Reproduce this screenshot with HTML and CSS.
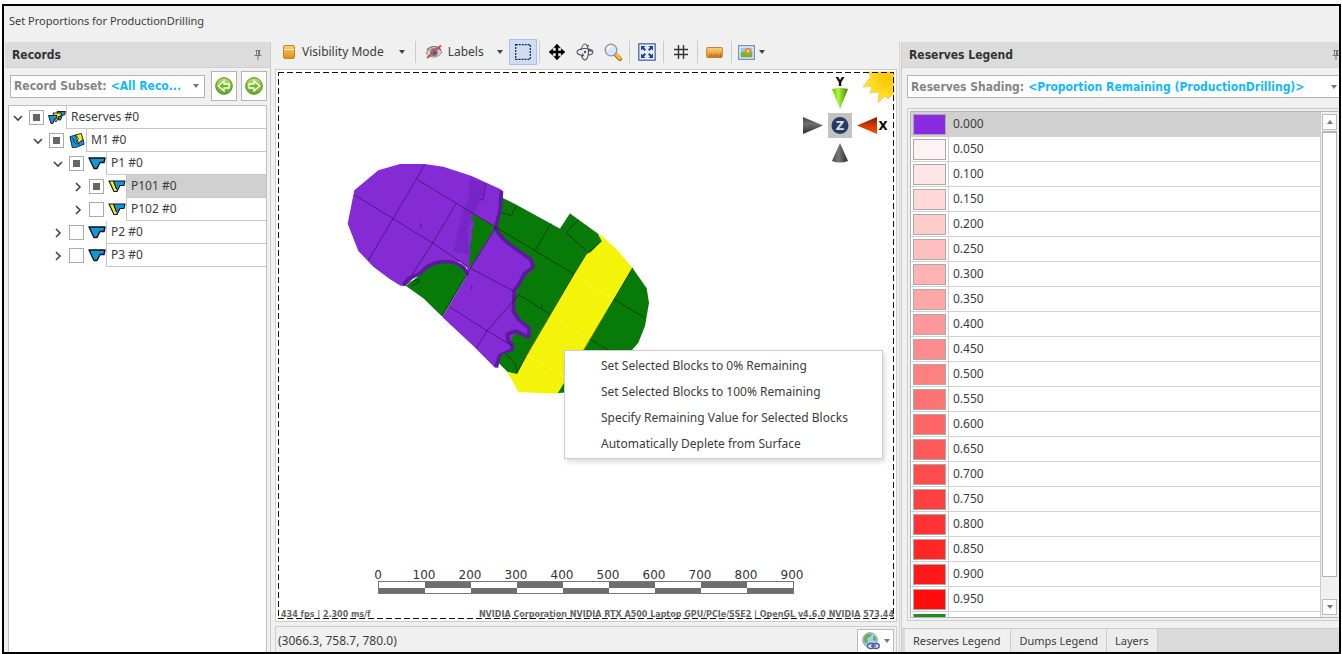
FILE: index.html
```html
<!DOCTYPE html>
<html lang="en">
<head>
<meta charset="utf-8">
<title>Set Proportions for ProductionDrilling</title>
<link rel="stylesheet" href="styles.css">
</head>
<body>
<svg class="defs" width="0" height="0" aria-hidden="true">
  <defs>
    <linearGradient id="gold" x1="0" y1="0" x2="0" y2="1"><stop offset="0" stop-color="#fbd27a"/><stop offset="1" stop-color="#e28a14"/></linearGradient>
    <linearGradient id="lime" x1="0" y1="0" x2="0" y2="1"><stop offset="0" stop-color="#b4e468"/><stop offset="1" stop-color="#5aa818"/></linearGradient>
    <linearGradient id="coneLime" x1="0" y1="0" x2="1" y2="0"><stop offset="0" stop-color="#6fc010"/><stop offset=".4" stop-color="#aaf83a"/><stop offset="1" stop-color="#4c7c10"/></linearGradient>
    <linearGradient id="coneGrey" x1="0" y1="0" x2="1" y2="0"><stop offset="0" stop-color="#444"/><stop offset=".4" stop-color="#777"/><stop offset="1" stop-color="#2c2c2c"/></linearGradient>
    <linearGradient id="coneGreyV" x1="0" y1="0" x2="0" y2="1"><stop offset="0" stop-color="#444"/><stop offset=".4" stop-color="#707070"/><stop offset="1" stop-color="#2c2c2c"/></linearGradient>
    <linearGradient id="coneRed" x1="0" y1="0" x2="0" y2="1"><stop offset="0" stop-color="#6e2005"/><stop offset=".55" stop-color="#d83a08"/><stop offset="1" stop-color="#ff4a05"/></linearGradient>
    <radialGradient id="sun" cx=".8" cy=".2" r=".9"><stop offset="0" stop-color="#ffc400"/><stop offset="1" stop-color="#ffe83c"/></radialGradient>
    <symbol id="pin" viewBox="0 0 8 10"><path d="M1.500.5h5M2.500.5v5M4.500.5v5M5.500.5v5M.5 5.500h7M4 5.500V10" fill="none" stroke="#777"/></symbol>
    <symbol id="pit" viewBox="0 0 18 14"><path d="M1 1.500h16l-1 4.500h-4l-3 6H6z" fill="#1596dc" stroke="#111" stroke-width="1.400" stroke-linejoin="round"/></symbol>
    <symbol id="stage" viewBox="0 0 18 14"><path d="M1 1.500h16l-1 4.500h-4l-3 6H6z" fill="#1596dc"/><path d="M1 1.500h4.500L9 12H6z" fill="#ffe81a"/><path d="M5.500 1.500l3 8M1 1.500h16l-1 4.500h-4l-3 6H6z" fill="none" stroke="#111" stroke-width="1.100" stroke-linejoin="round"/></symbol>
    <symbol id="pits" viewBox="0 0 18 14"><g stroke="#111" stroke-width=".9" stroke-linejoin="round"><path d="M9 1h8.500l-1 3.500h-2l-2 5h-2z" fill="#1596dc"/><path d="M5 2.500h8.500l-1 3.500h-2l-2 5H7z" fill="#ffe81a"/><path d="M.5 5h8.500l-1 3.500H6.500l-1.500 4.500H3z" fill="#1596dc"/></g></symbol>
    <symbol id="model" viewBox="0 0 18 16"><g stroke="#123" stroke-linejoin="round"><path d="M1.500 4l6-2 1 4 3 4 4-3 1 5-9 3.500H4z" fill="#1596dc"/><path d="M7.500 2l6-1.500L15.500 7l-4 3-3-1 2-3z" fill="#ffe81a"/><path d="M4 5c3 2 0 4 3 6s3-1 5 1" fill="none"/></g></symbol>
  </defs>
</svg>
<div class="window">
  <header class="title">Set Proportions for ProductionDrilling</header>
  <main class="work">
    <section class="panel records">
      <h2 class="panel-head">Records <svg class="pin"><use href="#pin"/></svg></h2>
      <div class="subset">
        <div class="combo">
          <label for="subset">Record Subset:</label>
          <select id="subset"><option>&lt;All Reco...</option></select>
        </div>
        <button class="nav" aria-label="Previous"><svg width="18" height="18" viewBox="0 0 18 18"><circle cx="9" cy="9" r="8.300" fill="url(#lime)" stroke="#4c8d1c"/><path d="M3.500 9L9 4v3h5v4H9v3z" fill="#6fb62a" stroke="#fff" stroke-width="1.300"/></svg></button>
        <button class="nav" aria-label="Next"><svg width="18" height="18" viewBox="0 0 18 18"><circle cx="9" cy="9" r="8.300" fill="url(#lime)" stroke="#4c8d1c"/><path d="M14.500 9L9 4v3H4v4h5v3z" fill="#6fb62a" stroke="#fff" stroke-width="1.300"/></svg></button>
      </div>
      <div class="tree" id="tree"></div>
    </section>

    <section class="view">
      <div class="toolbar">
        <button class="tool wide"><svg width="12" height="14" viewBox="0 0 12 14"><rect x=".5" y=".5" width="11" height="13" rx="1.500" fill="url(#gold)" stroke="#c98320"/><path d="M1 4.500h10" stroke="#fff0b8"/></svg>Visibility Mode<i class="caret"></i></button>
        <span class="sep"></span>
        <button class="tool wide labels"><svg width="18" height="16" viewBox="0 0 18 16"><path d="M1 9c3-6 13-6 16-1-3 6-12 7-16 1z" fill="#dcd0c8" stroke="#a08878"/><path d="M2 6c4-5 11-4 14 0" fill="none" stroke="#806858" stroke-width="1.300"/><circle cx="9" cy="8.500" r="3.800" fill="#5c7ca8"/><circle cx="9" cy="8.500" r="1.500" fill="#223"/><path d="M2 14L16 1.500" stroke="#d64a42" stroke-width="2"/></svg>Labels<i class="caret"></i></button>
        <button class="tool active" aria-label="Select box"><svg width="16" height="16" viewBox="0 0 16 16"><rect x=".7" y=".7" width="14.600" height="14.600" fill="none" stroke="#222" stroke-width="1.200" stroke-dasharray="2 1"/></svg></button>
        <span class="sep"></span>
        <button class="tool" aria-label="Pan"><svg width="16" height="16" viewBox="0 0 16 16"><path d="M8 0l3.300 3.800H9v3.200h3.200V4.700L16 8l-3.800 3.300V9H9v3.200h2.300L8 16l-3.300-3.800H7V9H3.800v2.300L0 8l3.800-3.300V7H7V3.800H4.700z" stroke="#000" stroke-width=".5"/></svg></button>
        <button class="tool" aria-label="Rotate"><svg width="18" height="18" viewBox="0 0 18 18" fill="none" stroke="#50555c" stroke-width="1.100"><path d="M7 12.500C3 12 1 10.500 1 9c0-2 4-3.500 8-3.500s8 1.500 8 3.500c0 1.500-2 2.800-5 3.300M6 10.500l1.500 2L5.500 14M9 1c2 0 3.500 4 3.500 8S11 17 9 17s-3.500-3-3.500-5M5.500 7C5.800 3.500 7.500 1 9 1M10.500 3L13 2.500M12 9l2-2 1.500 2"/><circle cx="9" cy="9" r=".7" fill="#333"/></svg></button>
        <button class="tool" aria-label="Zoom"><svg width="18" height="18" viewBox="0 0 18 18"><path d="M11 11l5 5" stroke="#a86a10" stroke-width="4" stroke-linecap="round"/><path d="M11.500 11l4.500 4.500" stroke="#ffbe28" stroke-width="2.600" stroke-linecap="round"/><circle cx="7" cy="7" r="5.800" fill="#d4e8fa" stroke="#8496a8" stroke-width="1.300"/><path d="M3.500 6.500c.5-2 2-3 4-3" fill="none" stroke="#fff" stroke-width="1.600"/></svg></button>
        <span class="sep"></span>
        <button class="tool" aria-label="Fit"><svg width="18" height="18" viewBox="0 0 18 18"><rect x=".8" y=".8" width="16.400" height="16.400" fill="#e4ecfa" stroke="#4c6aa6" stroke-width="1.300"/><g fill="#264478"><path d="M3 3h4.500L6 4.500 8 6.500 6.500 8l-2-2L3 7.500zM15 3v4.500L13.500 6l-2 2L10 6.500l2-2L10.500 3zM3 15v-4.500L4.500 12l2-2L8 11.500l-2 2L7.500 15zM15 15h-4.500l1.500-1.500-2-2 1.500-1.500 2 2 1.500-1.500z"/></g></svg></button>
        <span class="sep"></span>
        <button class="tool" aria-label="Grid"><svg width="14" height="14" viewBox="0 0 14 14"><path d="M4.500 0v14M9.500 0v14M0 4.500h14M0 9.500h14" stroke="#333" stroke-width="1.400"/></svg></button>
        <span class="sep"></span>
        <button class="tool" aria-label="Measure"><svg width="17" height="11" viewBox="0 0 18 12"><rect x=".5" y=".5" width="17" height="11" rx="1" fill="url(#gold)" stroke="#c2702a"/><path d="M3.500 11V8M6 11V7M8.500 11V8M11 11V7M13.500 11V8M15.500 11V7" stroke="#a8641c"/></svg></button>
        <span class="sep"></span>
        <button class="tool image" aria-label="Background image"><svg width="17" height="15" viewBox="0 0 17 15"><rect x=".7" y=".7" width="15.600" height="13.600" fill="#fff" stroke="#6c8cc8" stroke-width="1.300"/><path d="M2.500 2.500h12v5h-12z" fill="#9cc4ee"/><path d="M2.500 7.500c4-2 8 0 12-1v6h-12z" fill="#78b03c"/><circle cx="10" cy="6" r="3.200" fill="#e09038"/><circle cx="10" cy="6" r="1.200" fill="#ffe090"/></svg><i class="caret"></i></button>
      </div>

      <div class="viewport">
        <svg class="map" viewBox="0 0 1020 750">
          <path fill="#087a08" d="M515 140L555 160 690 234 720 188 812 255 907 350 950 412 957 455 945 525 925 575 895 610 740 722 685 726 600 715 561 670 533 663 505 635 480 300z"/>
          <path fill="#f4f40a" d="M804 250L812 252 860 295 907 350 762 598 685 724 680 728 565 723 545 685 531 663 561 670 600 595 735 365 770 308 782 304 815 270z"/>
          <path fill="#852bd6" d="M73 118L145 58 210 39 285 39 340 47 425 75 515 116 520 125 508 190 498 229 520 260 560 292 606 320 612 350 575 385 565 412 550 440 552 490 602 530 598 560 560 545 545 560 550 600 508 620 505 650 495 650 430 585 337 498 408 378 412 350 390 334 340 328 300 340 262 370 228 405 212 404 180 385 130 347 85 300 53 218z"/>
          <path fill="#7725c6" d="M418 84L466 96 446 160 412 235 418 312 370 300 398 180 415 150z"/>
          <path fill="#087a08" d="M228 405L262 378 290 352Q330 322 375 334L404 350 408 378 337 497 280 442z"/>
          <path fill="#087a08" d="M430 190L496 228 420 352 417 335 422 300 420 285 426 260 425 240 434 215 425 210z"/>
          <path fill="none" stroke="#5b1a9a" stroke-width="11" stroke-linejoin="round" d="M514 120L511 175 501 215 497 232Q512 262 550 288L602 325 610 347 582 370 568 398 553 418 550 480 566 506 598 532 596 558 556 540 532 550 534 568 549 583 545 598 508 614 498 648M220 402L235 383 270 368Q300 330 350 332 385 334 403 352L413 373"/>
          <path fill="#087a08" d="M552 552L594 566 568 600 558 640 510 632 516 610 553 600z"/>
          <g fill="none" stroke="#000" stroke-opacity=".5" stroke-width="2.500">
            <path d="M74 132l115 71 119 73 108 73M284 42L189 203 115 328M262 86l236 143 117 70 117 71M378 158L308 276l-63 97M498 229L421 352 336 495M664 217L615 299M568 430l-97 109-31 52M358 467l113 72 75 45M421 352l130 68M565 430l95 60M852 445l94 56M780 565l65 38M515 185l28 9 15-28M745 207l-37 38 62 55M908 351L760 598M815 270l-45 38L732 370 560 665M468 98l-10 50-10-4"/>
            <path stroke="#073f07" d="M515 140l40 20 135 74 30-46 86 62"/>
            <path d="M234 396l33-12-3 12-20 8M530 610l26 30 5 24M272 218v12M425 405v10M635 460v12"/>
          </g>
          <path fill="none" stroke="#ffff3a" stroke-width="2" d="M732 370l110 70M685 508l75 48M590 612l110 65"/>
        </svg>
        <svg class="gizmo" viewBox="0 0 96 96" role="img" aria-label="View axes">
          <path fill="url(#sun)" stroke="#ecc860" stroke-width=".8" d="M67 2L71 6 63 17 72 16 70 23 79 22 78 33 85 26 88 29 94 23V2z"/>
          <path fill="url(#coneLime)" d="M32 19q8-2 16 0l-8 20z"/>
          <path fill="url(#coneGrey)" d="M40 73l8 18q-8 3-16 0z"/>
          <path fill="url(#coneGreyV)" d="M3 47l20 8.500L3 64z"/>
          <path fill="url(#coneRed)" d="M57 55.500L77 47v17z"/>
          <path fill="#c3c3c3" d="M28 43h24v25H28z"/>
          <circle cx="40" cy="55.500" r="8.500" fill="#263a66"/>
          <text x="40" y="60" class="axis z">Z</text>
          <text x="40" y="16" class="axis">Y</text>
          <text x="83" y="60" class="axis">X</text>
        </svg>
        <div class="scale">
          <div class="scale-nums"><span>0</span><span>100</span><span>200</span><span>300</span><span>400</span><span>500</span><span>600</span><span>700</span><span>800</span><span>900</span></div>
          <div class="scale-bar"><i></i><i></i><i></i><i></i><i></i><i></i><i></i><i></i><i></i></div>
        </div>
        <div class="stats"><span>434 fps | 2.300 ms/f</span><span>NVIDIA Corporation NVIDIA RTX A500 Laptop GPU/PCIe/SSE2 | OpenGL v4.6.0 NVIDIA 573.44</span></div>
        <svg class="marquee"><rect width="100%" height="100%"/></svg>
        <div class="menu" role="menu">
          <button role="menuitem">Set Selected Blocks to 0% Remaining</button>
          <button role="menuitem">Set Selected Blocks to 100% Remaining</button>
          <button role="menuitem">Specify Remaining Value for Selected Blocks</button>
          <button role="menuitem">Automatically Deplete from Surface</button>
        </div>
      </div>
      <footer class="status"><span>(3066.3, 758.7, 780.0)</span>
        <button class="globe" aria-label="Coordinate system"><svg width="18" height="18" viewBox="0 0 18 18"><circle cx="8" cy="8" r="7.300" fill="#a4cef0" stroke="#7ca4c0"/><path d="M3 4c2-3 6-3 7-2l-2 3-3 1 1 3-2 3C2 10 1 6 3 4zM11 4l3 1v4l-3-1z" fill="#6cb04c"/><g fill="#dce4f4" stroke="#4c5c90" stroke-width="1.300"><ellipse cx="9" cy="14" rx="3.500" ry="2.500"/><ellipse cx="14" cy="14" rx="3.300" ry="2.500"/></g><path d="M9 14h5" stroke="#4c5c90" stroke-width="1.400"/></svg><i class="caret soft"></i></button>
      </footer>
    </section>

    <section class="panel legend">
      <h2 class="panel-head">Reserves Legend <svg class="pin"><use href="#pin"/></svg></h2>
      <div class="combo shading">
        <label for="shading">Reserves Shading:</label>
        <select id="shading"><option>&lt;Proportion Remaining (ProductionDrilling)&gt;</option></select>
      </div>
      <div class="list">
        <div class="list-inner">
          <div class="rows"><table><tbody id="legend"></tbody></table></div>
          <div class="scrollbar"><button aria-label="Scroll up"><i class="caret up"></i></button><div class="thumb"></div><button aria-label="Scroll down"><i class="caret soft"></i></button></div>
        </div>
      </div>
      <nav class="tabs"><button class="on">Reserves Legend</button><button>Dumps Legend</button><button>Layers</button></nav>
    </section>
  </main>
</div>
<script src="script.js"></script>
</body>
</html>
```
FILE: styles.css
```css
* { box-sizing: border-box; }
body {
  margin: 0;
  height: 100vh;
  padding: 4px 1px 0 2px;
  background: #fff;
  color: #3c3c3c;
  font: 12px/16px "Noto Sans", "Open Sans", sans-serif;
}
button, select, input { font: inherit; color: inherit; margin: 0; padding: 0; }
button { background: none; border: 0; display: flex; align-items: center; }
.defs { position: absolute; }
.window { height: 100%; display: flex; flex-direction: column; border: 2px solid #000; background: #f0f0f0; overflow: hidden; }
.title { height: 36px; padding: 7px 5px; flex: none; font-size: 11px; }
.work { flex: 1; min-height: 0; display: grid; grid-template-columns: 267px 1fr 439px; }
.panel, .view { display: flex; flex-direction: column; min-width: 0; min-height: 0; }
.panel-head { display: flex; align-items: center; justify-content: space-between; margin: 0; height: 26px; flex: none; padding: 0 8px 0 7px; background: #dcdcdc; border-bottom: 1px solid #d0d0d0; font: bold 12px/16px "DejaVu Sans Condensed", sans-serif; color: #333; }
.pin { width: 8px; height: 10px; }
.caret { border: 3px solid transparent; border-top: 4px solid #444; border-bottom: 0; }
.caret.soft { border-top-color: #777; }
.caret.up { border-top: 0; border-bottom: 4px solid #777; }

.records { border-right: 1px solid #ccc; padding-left: 1px; }
.subset { display: flex; align-items: center; gap: 4px; padding: 3px 3px 4px 5px; }
.combo { display: flex; align-items: center; flex: 1; gap: 4px; height: 23px; margin-right: 2px; padding-left: 3px; background: #fff; border: 1px solid #b4b4b4; font: bold 12px/16px "DejaVu Sans Condensed", sans-serif; color: #858585; white-space: nowrap; min-width: 0; }
.combo select { appearance: none; flex: 1; min-width: 0; border: 0; background: none; color: #14b9fa; }
.combo::after { content: ""; margin-right: 5px; border: 3px solid transparent; border-top: 4px solid #777; border-bottom: 0; }
.nav { width: 26px; height: 30px; justify-content: center; background: #fff; border: 1px solid #b4b4b4; }
.tree { flex: 1; min-height: 0; margin: 0 3px; border: 1px solid #c0c0c0; border-bottom: 0; background: #fff; }
.node { display: flex; align-items: center; height: 23px; padding-left: calc(4px + var(--depth) * 20px); }
.chev { width: 10px; height: 10px; flex: none; }
.chev path { fill: none; stroke: #444; stroke-width: 1.6; }
.node input { appearance: none; flex: none; width: 15px; height: 15px; margin: 0 4px 0 6px; border: 1px solid #aaa; background: #fff; }
.node input.some { background: linear-gradient(#666, #666) center / 7px 7px no-repeat #fff; }
.node .icon { width: 18px; height: 15px; flex: none; }
.node label { flex: 1; height: 23px; padding: 3px 4px; border-left: 1px solid #c8c8c8; border-bottom: 1px solid #c8c8c8; }
.node.selected label { background: #d0d0d0; }

.view { border-right: 1px solid #d4d4d4; padding: 0 2px 0 4px; }
.toolbar { display: flex; align-items: center; height: 34px; margin-top: -7px; flex: none; padding-left: 2px; }
.tool { height: 26px; width: 28px; justify-content: center; flex: none; }
.tool.wide { width: auto; padding: 0 8px 0 6px; gap: 7px; }
.tool.wide .caret { margin-left: 8px; }
.tool.wide.labels { gap: 5px; padding-right: 6px; }
.tool.active { background: #cfdcf5; border: 1px solid #a9c0e8; }
.tool.image { width: 34px; gap: 4px; }
.sep { width: 1px; height: 22px; margin: 0 3px 0 2px; background: #ccc; }
.viewport { position: relative; flex: 1; min-height: 0; background: #fff; border: 1px solid #ccc; display: flex; flex-direction: column; justify-content: flex-end; overflow: hidden; }
.marquee { position: absolute; inset: 2px; width: calc(100% - 4px); height: calc(100% - 4px); }
.marquee rect { fill: none; stroke: #111; stroke-width: 2; stroke-dasharray: 6 3; }
.map { position: absolute; left: 54px; top: 81px; width: 340px; height: 250px; }
.gizmo { position: absolute; right: 0; top: 0; width: 96px; height: 96px; }
.axis { font: bold 13px "DejaVu Sans Condensed", sans-serif; text-anchor: middle; fill: #000; }
.axis.z { fill: #ddd; }
.scale { align-self: center; color: #333; font: 12px/12px "DejaVu Sans", sans-serif; }
.scale-nums { display: grid; grid-template-columns: repeat(10, 46px); margin: 0 -23px; text-align: center; }
.scale-bar { display: grid; grid-template-columns: repeat(9, 46px); height: 13px; border: 1px solid #777; }
.scale-bar i { background: linear-gradient(#fff 50%, #6e6e6e 50%); }
.scale-bar i:nth-child(even) { background: linear-gradient(#6e6e6e 50%, #fff 50%); }
.stats { display: flex; justify-content: space-between; margin: 16px 2px 0 5px; padding-bottom: 1px; font: bold 8px/10px "DejaVu Sans", sans-serif; color: #666; white-space: nowrap; }
.menu { position: absolute; left: 288px; top: 280px; width: 319px; padding: 2px 0 1px; background: #fff; border: 1px solid #ccc; box-shadow: 2px 3px 5px rgba(0, 0, 0, .15); }
.menu button { width: 100%; height: 26px; padding-left: 36px; }
.status { display: flex; justify-content: space-between; align-items: center; height: 26px; flex: none; margin-top: 4px; padding: 3px 2px 0 2px; border: 1px solid #ccc; border-bottom: 0; }
.globe { width: 37px; height: 24px; justify-content: center; gap: 4px; background: #fff; border: 1px solid #bbb; }

.legend { border-left: 1px solid #ccc; margin-left: 1px; }
.legend .panel-head { padding-right: 0; }
.legend .pin { margin-right: -1px; }
.shading { flex: none; margin: 7px -4px 10px 5px; }
.list { flex: 1; min-height: 0; margin: 0 0 0 5px; padding: 2px 1px 2px 2px; border: 1px solid #ccc; border-right: 0; }
.list-inner { display: flex; height: 100%; border: 1px solid #b4b4b4; border-right: 0; }
.rows { flex: 1; overflow: hidden; background: #fff; border-right: 1px solid #ccc; }
.rows table { width: 100%; table-layout: fixed; border-spacing: 0; }
.rows td { height: 25px; padding: 0 4px; border-bottom: 1px solid #d0d0d0; border-left: 1px solid #d0d0d0; }
.rows td:first-child { width: 37px; padding: 0 2px; border-left: 0; }
.rows tr:first-child { background: #d0d0d0; }
.swatch { display: block; height: 21px; border: 1px solid #aaa; }
.rows tr:last-child .swatch { border-top-color: #228b22; }
.scrollbar { display: flex; flex-direction: column; width: 17px; padding: 2px 1px; }
.scrollbar button { width: 15px; height: 16px; flex: none; justify-content: center; background: #fff; border: 1px solid #bbb; }
.thumb { flex: 1; margin: 1px 0 22px; background: #fff; border: 1px solid #b4b4b4; border-top-width: 2px; }
.tabs { display: flex; height: 24px; flex: none; margin-top: 7px; padding-left: 3px; background: #dadada; border-top: 1px solid #ccc; font-size: 11px; }
.tabs button { height: 23px; padding: 0 8px; background: #ececec; border-right: 1px solid #ccc; }
.tabs .on { padding-right: 10px; background: #f0f0f0; }
```
FILE: script.js
```js
const nodes = [
  ["Reserves #0", 0, "pits", true, true],
  ["M1 #0", 1, "model", true, true],
  ["P1 #0", 2, "pit", true, true],
  ["P101 #0", 3, "stage", false, true],
  ["P102 #0", 3, "stage", false, false],
  ["P2 #0", 2, "pit", false, false],
  ["P3 #0", 2, "pit", false, false]
];
document.getElementById("tree").innerHTML = nodes.map(([name, depth, icon, open, some], i) => `
  <div class="node${i === 3 ? " selected" : ""}" style="--depth:${depth}">
    <svg class="chev" viewBox="0 0 10 10"><path d="${open ? "M1 3l4 4 4-4" : "M3 1l4 4-4 4"}"/></svg>
    <input type="checkbox" id="node${i}"${some ? ' class="some"' : ""}>
    <svg class="icon"><use href="#${icon}"/></svg>
    <label for="node${i}">${name}</label>
  </div>`).join("");

const rows = [];
for (let i = 0; i <= 20; i++) {
  const v = i / 20;
  const c = Math.round(255 * (1 - v));
  const color = i === 0 ? "#8a2be2" : i === 20 ? "#228b22" : `rgb(255,${c},${c})`;
  const label = i < 20 ? v.toFixed(3) : "";
  rows.push(`<tr><td><span class="swatch" style="background:${color}"></span></td><td>${label}</td></tr>`);
}
document.getElementById("legend").innerHTML = rows.join("");
```
